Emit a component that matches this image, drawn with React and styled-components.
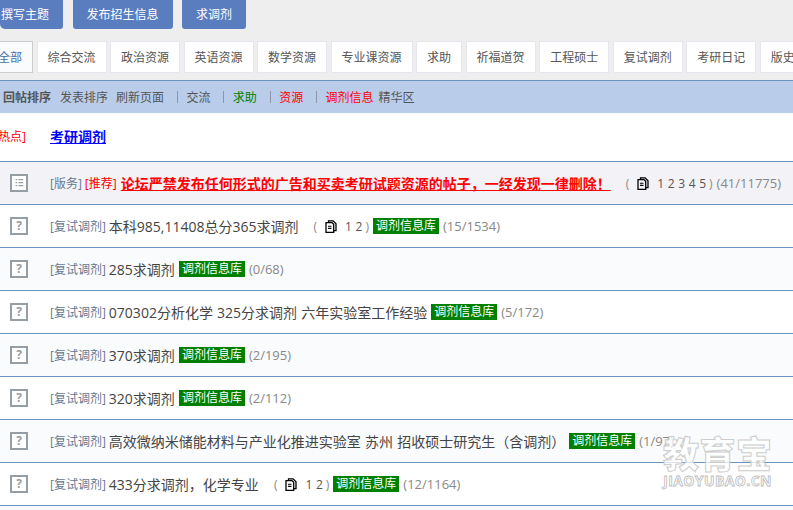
import React from "react";
import styled, { createGlobalStyle } from "styled-components";

const tabs = ["综合交流", "政治资源", "英语资源", "数学资源", "专业课资源", "求助", "祈福道贺", "工程硕士", "复试调剂", "考研日记", "版史"];

const topics = [
  { title: "本科985,11408总分365求调剂", pages: "1 2", count: "(15/1534)" },
  { title: "285求调剂", count: "(0/68)" },
  { title: "070302分析化学 325分求调剂 六年实验室工作经验", count: "(5/172)" },
  { title: "370求调剂", count: "(2/195)" },
  { title: "320求调剂", count: "(2/112)" },
  { title: "高效微纳米储能材料与产业化推进实验室 苏州 招收硕士研究生（含调剂）", count: "(1/97)" },
  { title: "433分求调剂，化学专业", pages: "1 2", count: "(12/1164)" },
];

function PageIcon() {
  return (
    <PageSvg viewBox="0 0 12 13" width="12" height="13">
      <path d="M3.5 2.5V.8h4.6l2.9 2.9v7H9" fill="none" stroke="#000" strokeWidth="1.3" />
      <path d="M1 2.6h6l1.7 1.7v8H1z" fill="none" stroke="#000" strokeWidth="1.3" />
      <path d="M3 6.2h3.5M3 8.4h3.5" stroke="#000" strokeWidth="1.1" />
    </PageSvg>
  );
}

function Pager({ pages }) {
  return (
    <PagerWrap>
      <PagerParen>(</PagerParen>
      <PageIcon />
      <PagerNums>{pages}</PagerNums>
      <PagerParen>)</PagerParen>
    </PagerWrap>
  );
}

function App() {
  return (
    <Page>
      <GlobalStyle />
      <Header>
        <Buttons>
          <ActionButton $lead>撰写主题</ActionButton>
          <ActionButton>发布招生信息</ActionButton>
          <ActionButton>求调剂</ActionButton>
        </Buttons>
        <Tabs>
          <Tab $active>全部</Tab>
          {tabs.map((t) => (
            <Tab key={t}>{t}</Tab>
          ))}
        </Tabs>
      </Header>
      <FilterBar>
        <FilterLink $bold $gap={9}>回帖排序</FilterLink>
        <FilterLink $gap={8}>发表排序</FilterLink>
        <FilterLink $gap={13}>刷新页面</FilterLink>
        <Sep />
        <FilterLink $gap={12.8}>交流</FilterLink>
        <Sep />
        <FilterLink $color="#008000" $gap={12.8}>求助</FilterLink>
        <Sep />
        <FilterLink $color="#ff0000" $gap={12.8}>资源</FilterLink>
        <Sep />
        <FilterLink $color="#ff0000" $gap={5}>调剂信息</FilterLink>
        <FilterLink>精华区</FilterLink>
      </FilterBar>
      <HotRow>
        <HotLabel>[热点]</HotLabel>
        <HotLink>考研调剂</HotLink>
      </HotRow>
      <TopicRow $bg="#f2f2f7">
        <IconBox>
          <svg viewBox="0 0 14 14" width="12" height="12">
            <path d="M3 3h2M6.5 3H12M3 6.5h2M6.5 6.5H12M3 10h2M6.5 10H12" stroke="#959da5" strokeWidth="1.6" />
          </svg>
        </IconBox>
        <Tag>[版务]</Tag>
        <RedTag>[推荐]</RedTag>
        <Notice>论坛严禁发布任何形式的广告和买卖考研试题资源的帖子，一经发现一律删除！</Notice>
        <Pager pages="1 2 3 4 5" />
        <Count>(41/11775)</Count>
      </TopicRow>
      {topics.map((t, i) => (
        <TopicRow key={t.title} $bg={i % 2 === 0 ? "#fff" : "#fafbfd"}>
          <IconBox>?</IconBox>
          <Tag>[复试调剂]</Tag>
          <Title>{t.title}</Title>
          {t.pages && <Pager pages={t.pages} />}
          <Badge>调剂信息库</Badge>
          <Count>{t.count}</Count>
        </TopicRow>
      ))}
      <Watermark>
        <WatermarkName>教育宝</WatermarkName>
        <WatermarkUrl>JIAOYUBAO.CN</WatermarkUrl>
      </Watermark>
    </Page>
  );
}

const sans = `"Open Sans", "Noto Sans CJK SC", sans-serif`;

const GlobalStyle = createGlobalStyle`
  html, body {
    margin: 0;
    padding: 0;
    height: 510px;
    overflow: hidden;
    background: #fafbfd;
  }
  body {
    font-family: ${sans};
    font-size: 12px;
  }
`;

const Page = styled.div`
  position: relative;
  width: 793px;
  height: 510px;
  overflow: hidden;
  background: #fafbfd;
`;

const Header = styled.div`
  height: 80px;
  background: #eeeeee;
  overflow: hidden;
`;

const Buttons = styled.div`
  display: flex;
  gap: 9.5px;
  height: 29px;
`;

const ActionButton = styled.div`
  height: 29px;
  line-height: 30px;
  padding: 0 14px 0 ${(p) => (p.$lead ? 1 : 14)}px;
  background: #5a7dc0;
  border-radius: ${(p) => (p.$lead ? "0 0 3px 5px" : "0 0 3px 3px")};
  color: #fff;
  font-size: 12px;
  white-space: nowrap;
`;

const Tabs = styled.div`
  display: flex;
  gap: 3.5px;
  margin: 12px 0 7px -13px;
  height: 32px;
  width: 900px;
`;

const Tab = styled.div`
  box-sizing: border-box;
  height: 32px;
  line-height: 31px;
  padding: 0 10px;
  flex: none;
  background: ${(p) => (p.$active ? "#f9fbfd" : "#fff")};
  border: 1px solid ${(p) => (p.$active ? "#cccccc" : "#e6e7ee")};
  color: ${(p) => (p.$active ? "#4a6fa5" : "#555")};
  white-space: nowrap;
`;

const FilterBar = styled.div`
  box-sizing: border-box;
  display: flex;
  align-items: center;
  height: 33px;
  padding-left: 3px;
  padding-bottom: 1px;
  background: #b9cdeb;
  border-top: 1px solid #6a93bf;
`;

const FilterLink = styled.span`
  margin-right: ${(p) => p.$gap || 0}px;
  color: ${(p) => p.$color || "#555"};
  font-weight: ${(p) => (p.$bold ? 700 : 400)};
  white-space: nowrap;
`;

const Sep = styled.span`
  width: 1px;
  height: 12px;
  margin-right: 8.5px;
  background: #8e97a5;
`;

const HotRow = styled.div`
  box-sizing: border-box;
  display: flex;
  align-items: center;
  height: 49px;
  margin-left: -6px;
  background: #fff;
  border-bottom: 1px solid #6a93bf;
`;

const HotLabel = styled.span`
  flex: none;
  width: 56px;
  margin-bottom: 2px;
  color: #ff0000;
  font-size: 12px;
  white-space: nowrap;
`;

const HotLink = styled.a`
  margin-bottom: 2px;
  color: #0000ff;
  font-size: 14px;
  font-weight: 700;
  text-decoration: underline;
`;

const TopicRow = styled.div`
  box-sizing: border-box;
  display: flex;
  align-items: center;
  height: 43px;
  padding-left: 10px;
  background: ${(p) => p.$bg};
  border-bottom: 1px solid #6a93bf;
  white-space: nowrap;
`;

const IconBox = styled.div`
  box-sizing: border-box;
  display: flex;
  align-items: center;
  justify-content: center;
  flex: none;
  width: 18px;
  height: 18px;
  margin-right: 22px;
  background: #fff;
  border: 2px solid #959da5;
  color: #959da5;
  font-size: 12px;
  font-weight: 700;
  line-height: 1;
`;

const Tag = styled.span`
  margin-right: 3px;
  color: #66788f;
  font-size: 12px;
`;

const RedTag = styled(Tag)`
  margin-right: 4px;
  color: #ff0000;
`;

const Notice = styled.a`
  color: #ff0000;
  font-size: 14px;
  font-weight: 700;
  text-decoration: underline;
`;

const Title = styled.span`
  color: #444;
  font-size: 14px;
  word-spacing: 0.5px;
`;

const PagerWrap = styled.span`
  display: inline-flex;
  align-items: center;
  margin-left: 15px;
  color: #555;
  font-size: 12px;
`;

const PagerParen = styled.span`
  color: #888;
`;

const PagerNums = styled.span`
  margin: 0 3px 0 8px;
  word-spacing: 0.5px;
`;

const PageSvg = styled.svg`
  margin-left: 8px;
`;

const Badge = styled.span`
  margin-left: 4px;
  padding: 0 3px;
  height: 16px;
  line-height: 16px;
  background: #008000;
  color: #fff;
  font-size: 12px;
`;

const Count = styled.span`
  margin-left: 4px;
  color: #888;
  font-size: 13px;
`;

const Watermark = styled.div`
  position: absolute;
  left: 663px;
  top: 436px;
  width: 109px;
  text-align: center;
  pointer-events: none;
`;

const WatermarkName = styled.div`
  color: rgba(255, 255, 255, 0.75);
  -webkit-text-stroke: 1px #cdcdcd;
  font-size: 36px;
  font-weight: 900;
  line-height: 38px;
  letter-spacing: 0.5px;
  white-space: nowrap;
`;

const WatermarkUrl = styled.div`
  color: rgba(255, 255, 255, 0.75);
  -webkit-text-stroke: 0.8px #bdbdbd;
  font-size: 14px;
  font-weight: 700;
  line-height: 14px;
  letter-spacing: 0.4px;
  white-space: nowrap;
`;

export default App;
